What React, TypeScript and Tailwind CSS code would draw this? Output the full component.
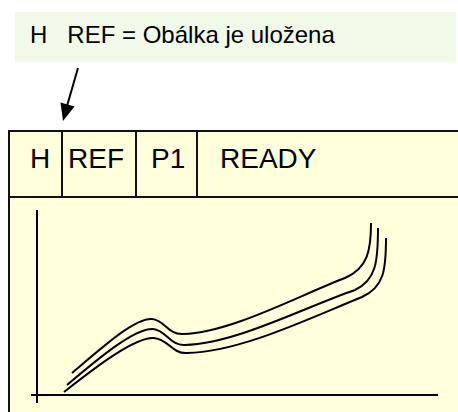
export default function App() {
  return (
    <div className="w-[458px] h-[412px] overflow-hidden bg-white font-['Liberation_Sans',Arial,sans-serif] text-black">
      <div className="pt-[12px] pl-[15px]">
        <div className="h-[50px] w-[441px] bg-[#f1fae9] pl-[15px] pt-[10px] text-[24px] leading-[26px] whitespace-pre">
          {"H   REF = Obálka je uložena"}
        </div>
      </div>

      <svg width="458" height="68" viewBox="0 62 458 68" className="block">
        <line x1="78" y1="68" x2="67" y2="106" stroke="black" strokeWidth="2" />
        <polygon points="63,121 60.5,102.5 74.5,106.5" fill="black" />
      </svg>

      <div className="ml-[8px] w-[470px] border-2 border-[#111] bg-[#ffffdc]">
        <div className="flex h-[66px] border-b-2 border-[#111] text-[28px] leading-[32px]">
          <div className="w-[53px] border-r-2 border-[#111] pl-[20px] pt-[11px]">H</div>
          <div className="w-[74px] border-r-2 border-[#111] pl-[5px] pt-[11px]">REF</div>
          <div className="w-[61px] border-r-2 border-[#111] pl-[14px] pt-[11px]">P1</div>
          <div className="pl-[22px] pt-[11px]">READY</div>
        </div>
        <svg width="448" height="230" viewBox="10 198 448 230" className="block">
          <g stroke="black" strokeWidth="2" fill="none">
            <line x1="37" y1="210" x2="37" y2="403" />
            <line x1="31" y1="395" x2="438" y2="395" />
            <path d="M72,373 C105,345 135,318 152,319 C165,320 168,335 183,334 C230,333 300,295 345,278 C368,268 371,250 371,223" />
            <path d="M67,385 C100,357 135,328 153,329 C166,330 170,346 185,345 C235,344 305,307 355,290 C376,280 378,262 378,228" />
            <path d="M64,392 C97,366 135,337 154,338 C168,339 172,354 187,353 C240,352 310,318 362,297 C384,287 386,270 386,238" />
          </g>
        </svg>
      </div>
    </div>
  );
}
